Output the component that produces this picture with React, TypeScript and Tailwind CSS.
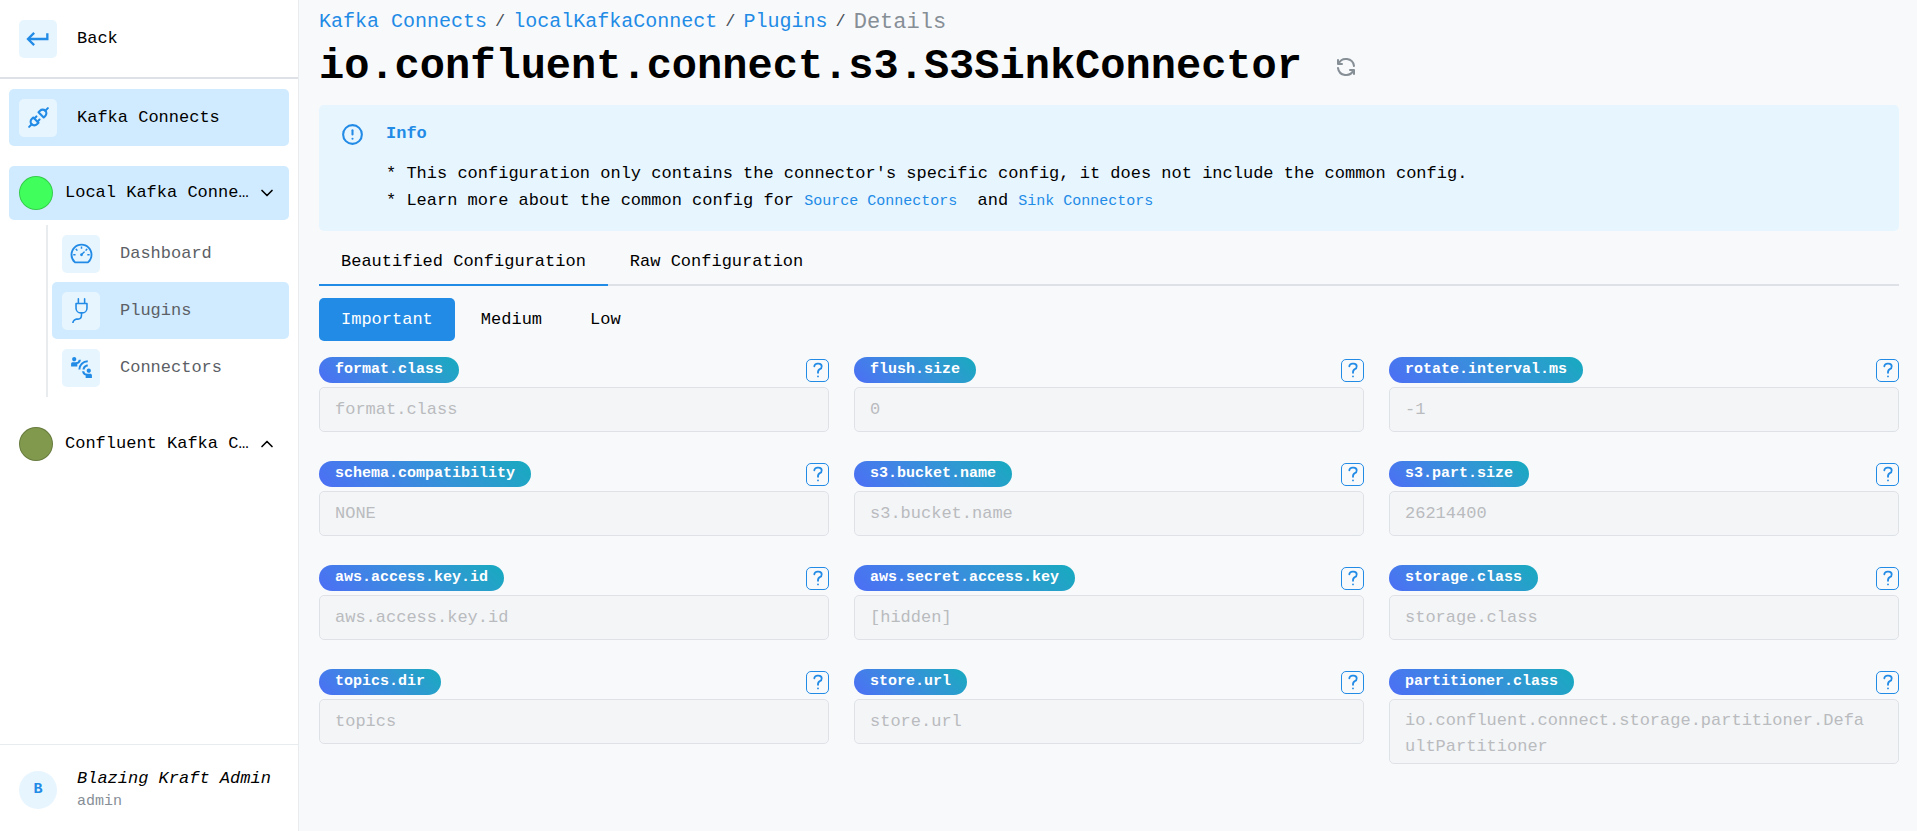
import type { ReactNode } from "react";
import { AiOutlineDashboard } from "react-icons/ai";
import { BsPlug } from "react-icons/bs";
import { MdConnectWithoutContact, MdKeyboardReturn } from "react-icons/md";
import { TbAlertCircle, TbPlugConnected, TbRefresh } from "react-icons/tb";
import { LuChevronDown, LuChevronUp } from "react-icons/lu";

type Field = {
  name: string;
  value: string;
  multiline?: boolean;
};

const FIELDS: Field[] = [
  { name: 'format.class', value: 'format.class' },
  { name: 'flush.size', value: '0' },
  { name: 'rotate.interval.ms', value: '-1' },
  { name: 'schema.compatibility', value: 'NONE' },
  { name: 's3.bucket.name', value: 's3.bucket.name' },
  { name: 's3.part.size', value: '26214400' },
  { name: 'aws.access.key.id', value: 'aws.access.key.id' },
  { name: 'aws.secret.access.key', value: '[hidden]' },
  { name: 'storage.class', value: 'storage.class' },
  { name: 'topics.dir', value: 'topics' },
  { name: 'store.url', value: 'store.url' },
  {
    name: 'partitioner.class',
    value: 'io.confluent.connect.storage.partitioner.DefaultPartitioner',
    multiline: true,
  },
];

const CRUMBS = ['Kafka Connects', 'localKafkaConnect', 'Plugins'];

function IconBox({ children }: { children: ReactNode }) {
  return (
    <span className="flex size-[38px] shrink-0 items-center justify-center rounded-[5px] bg-[#e7f5ff] text-[#228be6]">
      {children}
    </span>
  );
}

function NavItem({ icon, label, active, muted }: { icon: ReactNode; label: string; active?: boolean; muted?: boolean }) {
  return (
    <a
      href="#"
      className={`flex h-[57px] items-center gap-5 rounded-[5px] px-[10px] ${active ? 'bg-[#d0ebff]' : ''} ${muted ? 'text-[#5c5f66]' : ''}`}
    >
      <IconBox>{icon}</IconBox>
      <span>{label}</span>
    </a>
  );
}

function ClusterItem({ label, color, open }: { label: string; color: string; open?: boolean }) {
  return (
    <button
      type="button"
      aria-expanded={!!open}
      className={`flex h-[54px] w-full items-center rounded-[5px] pl-[10px] pr-3 text-left ${open ? 'bg-[#d0ebff]' : ''}`}
    >
      <span className={`size-[34px] shrink-0 rounded-full border border-black/20 ${color}`} />
      <span className="ml-3 min-w-0 flex-1 truncate">{label}</span>
      {open ? <LuChevronDown size={20} className="shrink-0" /> : <LuChevronUp size={20} className="shrink-0" />}
    </button>
  );
}

function Sidebar() {
  return (
    <aside className="flex w-[299px] shrink-0 flex-col border-r border-[#e9ecef] bg-white">
      <div className="border-b-2 border-[#dee2e6] px-[9px] py-[10px]">
        <NavItem icon={<MdKeyboardReturn size={28} />} label="Back" />
      </div>

      <nav className="flex flex-1 flex-col gap-5 px-[9px] pt-[10px]">
        <NavItem icon={<TbPlugConnected size={25} />} label="Kafka Connects" active />
        <div>
          <ClusterItem label="Local Kafka Connect" color="bg-[#40ff5c]" open />
          <div className="ml-[37px] mt-[5px] border-l-2 border-[#e9ecef] pb-px pl-1">
            <NavItem icon={<AiOutlineDashboard size={25} />} label="Dashboard" muted />
            <NavItem icon={<BsPlug size={25} />} label="Plugins" active muted />
            <NavItem icon={<MdConnectWithoutContact size={25} />} label="Connectors" muted />
          </div>
        </div>
        <ClusterItem label="Confluent Kafka Connect" color="bg-[#80994d]" />
      </nav>

      <div className="flex items-center gap-5 border-t border-[#e9ecef] pt-[22px] pr-3 pb-[18px] pl-[19px]">
        <span className="flex size-[38px] shrink-0 items-center justify-center rounded-full bg-[#e7f5ff] text-[15px] font-bold text-[#228be6]">
          B
        </span>
        <div>
          <div className="leading-6 italic">Blazing Kraft Admin</div>
          <div className="text-[15px] leading-[22px] text-[#868e96]">admin</div>
        </div>
      </div>
    </aside>
  );
}

function ConfigField({ name, value, multiline }: Field) {
  const box = 'block w-full resize-none overflow-hidden rounded-[5px] border border-[#ced4da] bg-[#f1f3f5] pl-[15px] leading-[26px] text-[#909296] opacity-60';

  return (
    <div>
      <div className="mb-1 flex items-center justify-between">
        <label
          htmlFor={name}
          className="h-[26px] rounded-full bg-linear-45 from-[#4c6ef5] to-[#15aabf] px-4 text-[15px] leading-[26px] font-bold text-white"
        >
          {name}
        </label>
        <button
          type="button"
          aria-label={`About ${name}`}
          className="flex size-[23px] items-center justify-center rounded-[5px] border border-[#228be6] text-[#228be6]"
        >
          <svg viewBox="0 0 24 24" className="size-[22px] shrink-0" fill="none" stroke="currentColor" strokeWidth="2" strokeLinecap="round" strokeLinejoin="round">
            <path d="M8 8a3.5 3 0 0 1 3.5 -3h1a3.5 3 0 0 1 3.5 3a3 3 0 0 1 -2 3a3 4 0 0 0 -2 4" />
            <path d="M12 19v.01" />
          </svg>
        </button>
      </div>
      {multiline ? (
        <textarea id={name} disabled defaultValue={value} className={`${box} h-[65px] pt-2 pr-[26px] break-all`} />
      ) : (
        <input id={name} type="text" disabled defaultValue={value} className={`${box} h-[45px] pr-[15px]`} />
      )}
    </div>
  );
}

export default function App() {
  return (
    <div className="flex min-h-screen bg-[#f8f9fb] font-['Liberation_Mono',monospace] text-[17px] text-black">
      <Sidebar />

      <main className="min-w-0 flex-1 pt-[6px] pr-[18px] pb-5 pl-5">
        <nav className="flex h-8 items-center gap-2">
          {CRUMBS.map(crumb => (
            <span key={crumb} className="flex items-center gap-2">
              <a href="#" className="text-xl text-[#228be6]">{crumb}</a>
              <span className="text-[#495057]">/</span>
            </span>
          ))}
          <span className="text-[22px] text-[#868e96]">Details</span>
        </nav>

        <div className="mt-px flex h-[56px] items-center gap-8">
          <h1 className="text-[42px] leading-[56px] font-bold">io.confluent.connect.s3.S3SinkConnector</h1>
          <button type="button" aria-label="Refresh" className="text-[#868e96]">
            <TbRefresh size={24} />
          </button>
        </div>

        <section className="mt-[10px] flex gap-[21px] rounded-[5px] bg-[#e7f5ff] px-[21px] pt-[15px] pb-4">
          <TbAlertCircle size={25} className="mt-[2px] shrink-0 text-[#228be6]" />
          <div className="leading-[27px]">
            <h2 className="font-bold text-[#228be6]">Info</h2>
            <p className="mt-[13px]">* This configuration only contains the connector's specific config, it does not include the common config.</p>
            <p>
              * Learn more about the common config for{' '}
              <a href="#" className="mr-[10px] text-[15px] text-[#228be6]">Source Connectors</a>
              {' '}and{' '}
              <a href="#" className="text-[15px] text-[#228be6]">Sink Connectors</a>
            </p>
          </div>
        </section>

        <div role="tablist" className="mt-2 flex border-b-2 border-[#dee2e6]">
          <button type="button" role="tab" aria-selected="true" className="-mb-0.5 h-[47px] border-b-2 border-[#228be6] px-[22px]">
            Beautified Configuration
          </button>
          <button type="button" role="tab" aria-selected="false" className="-mb-0.5 h-[47px] border-b-2 border-transparent px-[22px]">
            Raw Configuration
          </button>
        </div>

        <div role="tablist" className="mt-3 flex gap-1">
          <button type="button" role="tab" aria-selected="true" className="h-[43px] rounded-[5px] bg-[#228be6] px-[22px] text-white">Important</button>
          <button type="button" role="tab" aria-selected="false" className="h-[43px] rounded-[5px] px-[22px]">Medium</button>
          <button type="button" role="tab" aria-selected="false" className="h-[43px] rounded-[5px] px-[22px]">Low</button>
        </div>

        <div className="mt-4 grid grid-cols-3 gap-x-[25px] gap-y-[29px]">
          {FIELDS.map(field => <ConfigField key={field.name} {...field} />)}
        </div>
      </main>
    </div>
  );
}
